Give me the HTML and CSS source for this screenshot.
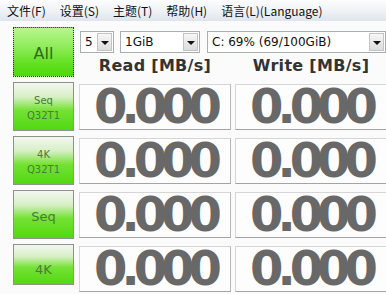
FILE: index.html
```html
<!DOCTYPE html>
<html>
  <head>
    <meta name="viewport" content="width=device-width, initial-scale=1.0">
    <title>CrystalDiskMark</title>
    <link rel="stylesheet" href="styles.css">
  </head>
  <body>
    <div id="menu-bar">
      <span class="menu-item">文件(F)</span>
      <span class="menu-item">设置(S)</span>
      <span class="menu-item">主题(T)</span>
      <span class="menu-item">帮助(H)</span>
      <span class="menu-item">语言(L)(Language)</span>
    </div>
    <div id="main">
      <div class="test-btn all-btn">All</div>
      <div id="top">
        <div id="combos">
          <div class="combo combo-count"><span class="combo-text">5</span><span class="combo-arrow"></span></div>
          <div class="combo combo-size"><span class="combo-text">1GiB</span><span class="combo-arrow"></span></div>
          <div class="combo combo-drive"><span class="combo-text">C: 69% (69/100GiB)</span><span class="combo-arrow"></span></div>
        </div>
        <div class="col-head">Read [MB/s]</div>
        <div class="col-head">Write [MB/s]</div>
      </div>

      <div class="test-btn small">Seq<br>Q32T1</div>
      <div class="value">0.000</div>
      <div class="value">0.000</div>

      <div class="test-btn small">4K<br>Q32T1</div>
      <div class="value">0.000</div>
      <div class="value">0.000</div>

      <div class="test-btn">Seq</div>
      <div class="value">0.000</div>
      <div class="value">0.000</div>

      <div class="test-btn last">4K</div>
      <div class="value">0.000</div>
      <div class="value">0.000</div>
    </div>
  </body>
</html>
```

FILE: styles.css
```css
body {
  margin: 0;
  width: 386px;
  height: 294px;
  overflow: hidden;
  background-color: #fbfbfb;
  font-family: "DejaVu Sans", sans-serif;
}

#menu-bar {
  height: 21px;
  display: flex;
  align-items: center;
  gap: 14px;
  padding-left: 7px;
  background: linear-gradient(#fdfdfe, #eef1f5 55%, #dfe5ed);
  font-family: "Noto Sans CJK SC", sans-serif;
  font-size: 12px;
  color: #111;
}

#main {
  display: grid;
  grid-template-columns: 62px 152px 152px;
  grid-template-rows: 50px 49px 49px 49px 49px;
  column-gap: 4px;
  row-gap: 5px;
  padding: 6px 0 0 13px;
}

.test-btn {
  width: 61px;
  box-sizing: border-box;
  border: 1px solid #8c9488;
  background: linear-gradient(#f4f6f2, #d6efc4 30%, #74e234 58%, #52d812);
  color: #4a7a3c;
  font-size: 13px;
  display: flex;
  align-items: center;
  justify-content: center;
  text-align: center;
  padding-top: 4px;
}

.test-btn.small {
  font-size: 10px;
  line-height: 15px;
  padding-top: 2px;
}

.test-btn.last {
  height: 41px;
  padding-top: 10px;
}

.all-btn {
  border: 1px dotted #333;
  background: linear-gradient(#b9f690, #8eec58 40%, #62e020 75%, #4fd80c);
  color: #2c6a1e;
  font-size: 16px;
  padding-top: 2px;
}

#top {
  grid-column: 2 / 4;
  display: grid;
  grid-template-columns: 152px 152px;
  column-gap: 4px;
  align-content: start;
}

#combos {
  grid-column: 1 / 3;
  display: flex;
  margin: 4px 0 0 1px;
}

.combo {
  height: 22px;
  box-sizing: border-box;
  border: 1px solid #a9aeb4;
  background-color: #fff;
  display: flex;
  align-items: stretch;
  font-size: 12px;
  color: #111;
}

.combo-count {
  width: 34px;
  margin-right: 6px;
}

.combo-size {
  width: 80px;
  margin-right: 7px;
}

.combo-drive {
  width: 179px;
}

.combo-text {
  flex: 1;
  padding-left: 4px;
  line-height: 20px;
  white-space: nowrap;
}

.combo-arrow {
  width: 15px;
  margin: 1px;
  box-sizing: border-box;
  border: 1px solid #c4c4c4;
  background: linear-gradient(#f6f6f6, #dcdcdc);
  display: flex;
  align-items: center;
  justify-content: center;
}

.combo-arrow::after {
  content: "";
  border-left: 4px solid transparent;
  border-right: 4px solid transparent;
  border-top: 4px solid #111;
  margin-top: 2px;
}

.col-head {
  margin-top: 4px;
  line-height: 18px;
  text-align: center;
  font-weight: bold;
  font-size: 16px;
  color: #333;
  letter-spacing: 0.3px;
}

.value {
  margin: 2px 0 1px 0;
  box-sizing: border-box;
  border: 1px solid #d6d6d6;
  border-bottom-color: #a4a4a4;
  border-right-color: #b6b6b6;
  background-color: #fdfdfd;
  text-align: center;
  font-weight: bold;
  font-size: 48px;
  line-height: 42px;
  letter-spacing: -6px;
  color: #686868;
  white-space: nowrap;
}
```
